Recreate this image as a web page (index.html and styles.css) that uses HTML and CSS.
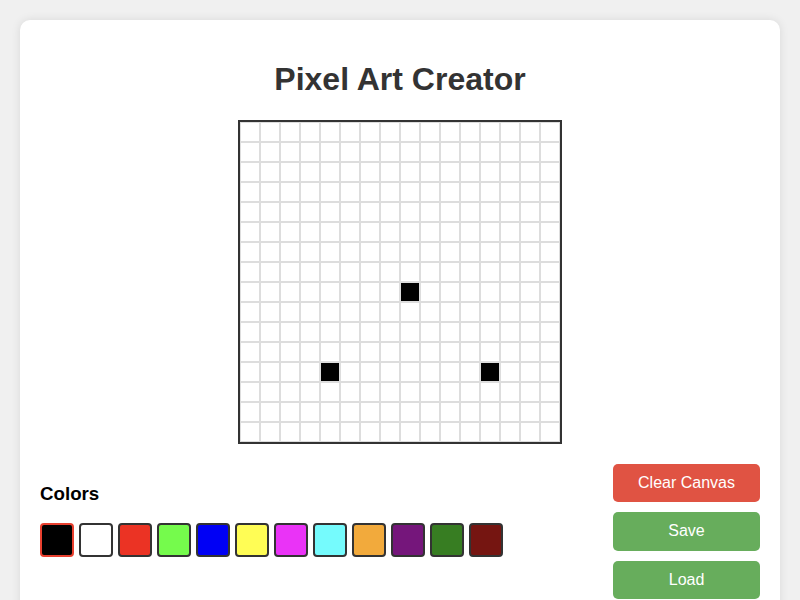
FILE: index.html
```html
<!DOCTYPE html>
<html lang="en">
<head>
<meta charset="utf-8">
<title>Pixel Art Creator</title>
<link rel="stylesheet" href="styles.css">
</head>
<body>
<div class="card">
  <h1 class="title">Pixel Art Creator</h1>
  <div class="grid" id="grid"></div>
  <div class="controls">
    <div class="palette">
      <h3 class="palette-title">Colors</h3>
      <div class="swatches">
        <div class="swatch selected c-black"></div>
        <div class="swatch c-white"></div>
        <div class="swatch c-red"></div>
        <div class="swatch c-lime"></div>
        <div class="swatch c-blue"></div>
        <div class="swatch c-yellow"></div>
        <div class="swatch c-magenta"></div>
        <div class="swatch c-cyan"></div>
        <div class="swatch c-orange"></div>
        <div class="swatch c-purple"></div>
        <div class="swatch c-green"></div>
        <div class="swatch c-maroon"></div>
      </div>
    </div>
    <div class="actions">
      <button class="btn btn-clear">Clear Canvas</button>
      <button class="btn btn-green">Save</button>
      <button class="btn btn-green">Load</button>
    </div>
  </div>
</div>
<script>
  var grid = document.getElementById('grid');
  var filled = {'8,8':1,'12,4':1,'12,12':1};
  for (var r = 0; r < 16; r++) {
    for (var c = 0; c < 16; c++) {
      var d = document.createElement('div');
      d.className = 'pixel' + (filled[r + ',' + c] ? ' on' : '');
      grid.appendChild(d);
    }
  }
</script>
</body>
</html>
```
FILE: styles.css
```css
html, body {
  margin: 0;
  padding: 0;
}
body {
  background: #f0f0f0;
  font-family: "Liberation Sans", Arial, sans-serif;
  padding: 20px;
}
.card {
  background: #fff;
  border-radius: 10px;
  box-shadow: 0 0 10px rgba(0, 0, 0, 0.1);
  padding: 20px;
  display: flex;
  flex-direction: column;
  align-items: center;
}
.title {
  font-size: 32px;
  margin: 21.44px 0;
  color: #333;
  font-weight: bold;
}
.grid {
  display: grid;
  grid-template-columns: repeat(16, 20px);
  grid-auto-rows: 20px;
  border: 2px solid #333;
}
.pixel {
  box-sizing: border-box;
  border: 1px solid #ddd;
  background: #fff;
}
.pixel.on {
  background: #000;
}
.controls {
  align-self: stretch;
  margin-top: 20px;
  display: flex;
  justify-content: space-between;
  align-items: flex-start;
}
.palette-title {
  font-size: 18.72px;
  margin: 18.72px 0;
  color: #000;
}
.swatches {
  display: flex;
  gap: 5px;
}
.swatch {
  width: 30px;
  height: 30px;
  border: 2px solid #333;
  border-radius: 4px;
}
.swatch.selected {
  border-color: #e8402f;
}
.c-black { background: #000; }
.c-white { background: #fff; }
.c-red { background: #eb3324; }
.c-lime { background: #75fb4c; }
.c-blue { background: #0000f5; }
.c-yellow { background: #fffd55; }
.c-magenta { background: #ea33f7; }
.c-cyan { background: #75fbfd; }
.c-orange { background: #f2aa3c; }
.c-purple { background: #75167b; }
.c-green { background: #377d22; }
.c-maroon { background: #751511; }
.actions {
  display: flex;
  flex-direction: column;
  gap: 10px;
}
.btn {
  font-family: "Liberation Sans", Arial, sans-serif;
  font-size: 16px;
  color: #fff;
  border: none;
  border-radius: 5px;
  padding: 10px 25px;
  line-height: 18.4px;
}
.btn-clear { background: #e05343; }
.btn-green { background: #67ad5c; }
```
